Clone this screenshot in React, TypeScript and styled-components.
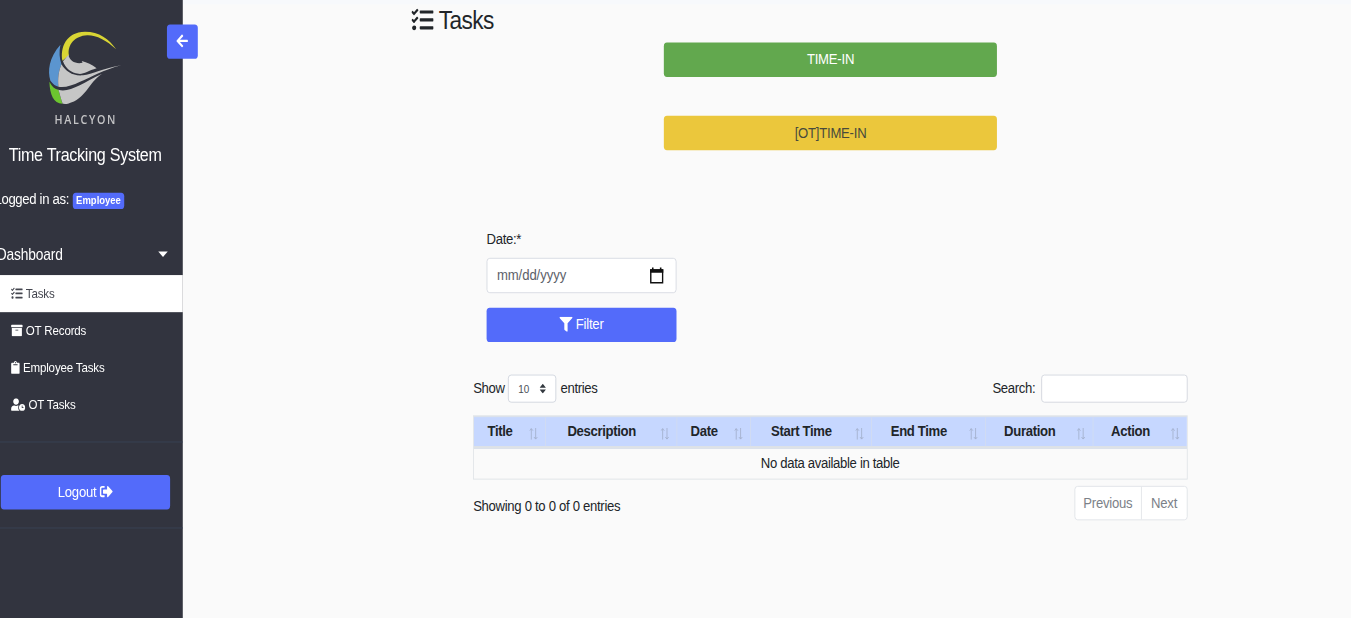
import React from "react";
import styled, { createGlobalStyle } from "styled-components";
import {
  FaArchive,
  FaArrowLeft,
  FaClipboard,
  FaFilter,
  FaSignOutAlt,
  FaTasks,
  FaUserClock,
} from "react-icons/fa";

const GlobalStyle = createGlobalStyle`
  *, *::before, *::after { box-sizing: border-box; }
  html, body { margin: 0; padding: 0; background: #fafafa; }
  svg { display: inline-block; flex: none; }
`;

const Viewport = styled.div`
  width: 1351px;
  height: 618px;
  overflow: hidden;
`;

const Page = styled.div`
  display: flex;
  width: 1707.5px;
  height: 683px;
  transform: scale(0.79122, 0.90483);
  transform-origin: 0 0;
  background: #fafafa;
  color: #212529;
  font: 16.6px/24px "Liberation Sans", Arial, sans-serif;
  letter-spacing: -0.42px;
`;

const Sidebar = styled.aside`
  position: relative;
  display: flex;
  flex-direction: column;
  flex: none;
  width: 230.5px;
  height: 683px;
  background: #32343f;
  color: #fff;
`;

const Collapse = styled.button`
  position: absolute;
  top: 27px;
  left: 210.5px;
  display: flex;
  align-items: center;
  justify-content: center;
  width: 39px;
  height: 38px;
  padding: 0 0 1px;
  border: 0;
  border-radius: 4px;
  background: #536bfa;
  color: #fff;
  font-size: 16.5px;
`;

const Brand = styled.div`
  display: flex;
  flex-direction: column;
  height: 157px;
  padding: 33px 0 0 60px;
`;

const BrandName = styled.span`
  margin: 6px 0 0 9px;
  color: #c4c4c6;
  font: 600 13.5px/18px "Open Sans", sans-serif;
  letter-spacing: 2.1px;
`;

const SystemName = styled.div`
  height: 28px;
  padding-left: 11px;
  font-size: 20.4px;
  line-height: 28px;
  letter-spacing: -0.38px;
  white-space: nowrap;
`;

const LoggedIn = styled.div`
  display: flex;
  align-items: center;
  height: 24px;
  margin: 23px 0 0 -7px;
  white-space: nowrap;
`;

const Badge = styled.span`
  margin: 3px 0 0 5px;
  padding: 0 4px;
  border-radius: 4px;
  background: #536bfa;
  font-size: 12px;
  font-weight: 700;
  line-height: 18px;
  letter-spacing: -0.02px;
`;

const Group = styled.div`
  display: flex;
  align-items: center;
  justify-content: space-between;
  height: 45px;
  margin: 27px 19px 0 -4px;
  padding-bottom: 2px;
  font-size: 17.4px;
  letter-spacing: -0.2px;
`;

const Caret = styled.i`
  border-top: 6px solid #fff;
  border-left: 6px solid transparent;
  border-right: 6px solid transparent;
`;

const NavItem = styled.a<{ $active?: boolean; $icon?: number }>`
  display: flex;
  align-items: center;
  gap: 4px;
  height: 41px;
  padding: 0 0 1px 14px;
  background: ${(p) => (p.$active ? "#fff" : "transparent")};
  color: ${(p) => (p.$active ? "#44464f" : "#fff")};
  font-size: 14.6px;
  letter-spacing: -0.2px;
  svg {
    width: ${(p) => p.$icon ?? 14.6}px;
    height: 14.6px;
  }
`;

const Rule = styled.div<{ $top: number }>`
  flex: none;
  height: 1px;
  margin-top: ${(p) => p.$top}px;
  background: #3a4256;
`;

const Button = styled.button<{ $bg: string; $color?: string; $width: number }>`
  display: flex;
  align-items: center;
  justify-content: center;
  gap: 4px;
  width: ${(p) => p.$width}px;
  height: 38px;
  padding: 0 0 1px;
  border: 0;
  border-radius: 4px;
  background: ${(p) => p.$bg};
  color: ${(p) => p.$color ?? "#fff"};
  font: inherit;
  letter-spacing: -0.3px;
`;

const LogoutArea = styled.div`
  padding: 36px 0 0 1px;
`;

const Main = styled.main`
  flex: 1;
  height: 683px;
  border-top: 5px solid #f7f9fc;
`;

const Heading = styled.h3`
  display: flex;
  align-items: center;
  gap: 7px;
  height: 34px;
  margin: 0 0 0 289px;
  font-size: 28.6px;
  font-weight: 400;
  letter-spacing: -0.75px;
  svg { width: 28px; height: 28px; }
`;

const Punches = styled.div`
  display: flex;
  flex-direction: column;
  gap: 43px;
  margin: 8px 0 0 608.7px;
`;

const FilterForm = styled.div`
  display: flex;
  flex-direction: column;
  width: 240px;
  margin: 86.500px 0 0 384.5px;
`;

const DateInput = styled.div`
  display: flex;
  align-items: center;
  justify-content: space-between;
  height: 39.5px;
  margin: 8px 0 16px;
  padding: 0 15px 0 12px;
  border: 1px solid #d5d8e0;
  border-radius: 4px;
  background: #fff;
  color: #5c6169;
  letter-spacing: -0.1px;
`;

const Records = styled.section`
  width: 902.5px;
  margin: 36px 0 0 367.5px;
`;

const Bar = styled.div`
  display: flex;
  justify-content: space-between;
  height: 31px;
`;

const Field = styled.label`
  display: flex;
  align-items: center;
  height: 29px;
`;

const Select = styled.span`
  display: flex;
  align-items: center;
  justify-content: space-between;
  width: 61.5px;
  height: 31px;
  margin: 2px 5px 0 4px;
  padding: 0 12px 0 12px;
  border: 1px solid #ced2dc;
  border-radius: 4px;
  background: #fff;
  color: #495057;
  font-size: 12.5px;
  letter-spacing: 0;
`;

const SearchInput = styled.input`
  width: 185px;
  height: 31px;
  margin: 2px 0 0 7px;
  border: 1px solid #d0d3dc;
  border-radius: 4px;
  background: #fff;
`;

const Table = styled.div`
  margin-top: 14px;
  border: 1px solid #dee2e6;
`;

const HeadRow = styled.div`
  display: grid;
  grid-template-columns: 91px 166px 93px 152.5px 144.5px 136px 1fr;
  height: 36px;
  border-top: 1px solid #dee2e6;
  border-bottom: 3px solid #dee2e6;
  background: #c6d7ff;
`;

const HeadCell = styled.div`
  display: grid;
  grid-template-columns: 1fr 11px;
  column-gap: 9px;
  align-items: center;
  padding: 0 9px 0 5px;
  border-right: 1px solid #d3dcf0;
  font-weight: 700;
  text-align: center;
  white-space: nowrap;
  &:last-child { border-right: 0; }
`;

const Empty = styled.div`
  height: 32.5px;
  line-height: 32px;
  text-align: center;
`;

const Footer = styled.div`
  display: flex;
  justify-content: space-between;
  height: 38px;
  margin-top: 7px;
`;

const Info = styled.div`
  padding-top: 11px;
  letter-spacing: -0.39px;
`;

const Pager = styled.div`
  display: flex;
  width: 143px;
  border: 1px solid #dee2e6;
  border-radius: 4px;
  background: #fff;
  color: #7b8188;
  line-height: 36px;
  letter-spacing: -0.3px;
  text-align: center;
`;

const PageLink = styled.span<{ $width: number }>`
  width: ${(p) => p.$width}px;
  &:first-child { border-right: 1px solid #dee2e6; }
`;

const Logo = () => (
  <svg width="94" height="84" viewBox="47.6 30 74 76" preserveAspectRatio="none">
    <path d="M62.500 61C60 48 66 32 85 31.800C99 31.800 109 39 116 49.500C106 40 96 35 87 35.300C75 35.800 67 45 69 55.500Z" fill="#d9d534" />
    <path d="M60.500 45C49 58 47.500 71 50.500 81C53 84.500 56 86.500 58.500 87C57.800 78 58.500 72 61.500 64.500C59.500 59 59 52 60.500 45Z" fill="#5b95cf" />
    <path d="M61.500 64.500C66 72 73 76.500 83 75.500C92 74.300 103 68.500 121 65.300C103 70 91 77 80 82C72 86 65 88 58.500 87C57.800 78 58.500 72 61.500 64.500Z" fill="#c6c6c6" />
    <path d="M63 61.500L68.500 55C69.500 61.500 76 64.500 82.500 63L81.700 61.200C87 62.500 92 64.500 96.500 68.500C88 71 84 74.500 78.500 74C71 73 66 69 63 61.500Z" fill="#c6c6c6" />
    <path d="M49.500 82C52 87 55 89.500 58.500 90L62.500 104C53.500 103.500 50 95 49.500 82Z" fill="#6cc52f" />
    <path d="M58.500 90C70 93 82 83.500 102 74C88 83 86 99.500 68 103.800C66 104.200 64.500 104.200 62.700 104C61 99 60 95 58.500 90Z" fill="#c6c6c6" />
  </svg>
);

const Calendar = () => (
  <svg width="18" height="19" viewBox="0 0 18 19">
    <path d="M1.500 5V17.500H16.500V3.500H1.500V5" fill="none" stroke="#111" strokeWidth="1.800" />
    <path d="M.6 2.500H17.400V6.500H.6ZM3 .5H5V3H3ZM13 .5H15V3H13Z" fill="#111" />
  </svg>
);

const SelectArrows = () => (
  <svg width="8" height="11" viewBox="0 0 8 11">
    <path d="M0 4.500L4 0L8 4.500ZM0 6.500L4 11L8 6.500Z" fill="#343a40" />
  </svg>
);

const SortArrows = () => (
  <svg width="11" height="13" viewBox="0 0 11 13" transform="translate(0 2)">
    <path d="M2.500 13V.8M.4 3L2.500 .7L4.600 3M8 0V12.200M5.900 10L8 12.300L10.100 10" fill="none" stroke="#a3b0cc" strokeWidth="1" />
  </svg>
);

const columns = ["Title", "Description", "Date", "Start Time", "End Time", "Duration", "Action"];

export default function App() {
  return (
    <Viewport>
      <GlobalStyle />
      <Page>
        <Sidebar>
          <Brand>
            <Logo />
            <BrandName>HALCYON</BrandName>
          </Brand>
          <SystemName>Time Tracking System</SystemName>
          <LoggedIn>
            Logged in as: <Badge>Employee</Badge>
          </LoggedIn>
          <Group>
            Dashboard <Caret />
          </Group>
          <NavItem $active><FaTasks />Tasks</NavItem>
          <NavItem><FaArchive />OT Records</NavItem>
          <NavItem $icon={11}><FaClipboard />Employee Tasks</NavItem>
          <NavItem $icon={18}><FaUserClock />OT Tasks</NavItem>
          <Rule $top={20} />
          <LogoutArea>
            <Button $bg="#536bfa" $width={213.5}>Logout <FaSignOutAlt /></Button>
          </LogoutArea>
          <Rule $top={20} />
          <Collapse aria-label="Collapse sidebar"><FaArrowLeft /></Collapse>
        </Sidebar>
        <Main>
          <Heading><FaTasks />Tasks</Heading>
          <Punches>
            <Button $bg="#62a84e" $width={421}>TIME-IN</Button>
            <Button $bg="#ebc73c" $color="#484a3c" $width={421}>[OT]TIME-IN</Button>
          </Punches>
          <FilterForm>
            <span>Date:*</span>
            <DateInput>mm/dd/yyyy <Calendar /></DateInput>
            <Button $bg="#536bfa" $width={240}><FaFilter />Filter</Button>
          </FilterForm>
          <Records>
            <Bar>
              <Field>Show <Select>10 <SelectArrows /></Select> entries</Field>
              <Field>Search: <SearchInput /></Field>
            </Bar>
            <Table>
              <HeadRow>
                {columns.map((name) => (
                  <HeadCell key={name}>{name}<SortArrows /></HeadCell>
                ))}
              </HeadRow>
              <Empty>No data available in table</Empty>
            </Table>
            <Footer>
              <Info>Showing 0 to 0 of 0 entries</Info>
              <Pager>
                <PageLink $width={85}>Previous</PageLink>
                <PageLink $width={57}>Next</PageLink>
              </Pager>
            </Footer>
          </Records>
        </Main>
      </Page>
    </Viewport>
  );
}
